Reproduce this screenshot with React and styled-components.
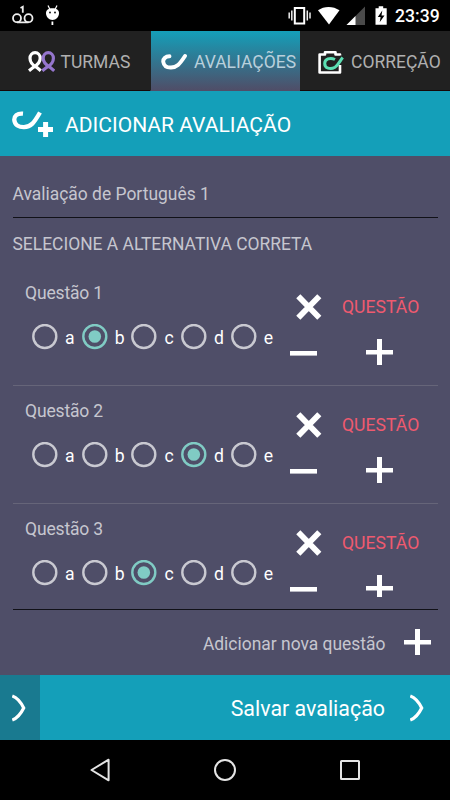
import React from "react";
import styled, { createGlobalStyle } from "styled-components";

const GlobalStyle = createGlobalStyle`
  * {
    box-sizing: border-box;
  }
  body {
    margin: 0;
    background: #000;
    font-family: Roboto, "Liberation Sans", sans-serif;
  }
  svg {
    display: block;
    flex: none;
  }
`;

const Screen = styled.div`
  width: 450px;
  height: 800px;
  display: flex;
  flex-direction: column;
  overflow: hidden;
  background: #4f4e68;
`;

const StatusBar = styled.header`
  height: 31px;
  flex: none;
  background: #000;
  display: flex;
  justify-content: space-between;
`;

const Clock = styled.span`
  color: #fff;
  font-size: 17.6px;
  font-weight: 500;
  line-height: 33px;
  width: 55px;
  white-space: nowrap;
`;

const StatusRight = styled.div`
  display: flex;
`;

const Tabs = styled.nav`
  height: 60px;
  flex: none;
  display: grid;
  grid-template-columns: 150px 150px 150px;
  background: #212121;
`;

const Tab = styled.div`
  display: flex;
  align-items: center;
  gap: ${(p) => p.$gap}px;
  padding-left: ${(p) => p.$left}px;
  padding-top: 2px;
  white-space: nowrap;
  font-size: 17.5px;
  color: ${(p) => (p.$active ? "#b9d0dc" : "#b0b0b0")};
  border-left: ${(p) => (p.$active ? "1px solid #212121" : "0")};
  border-bottom: 1px solid ${(p) => (p.$active ? "#4f4e68" : "#170707")};
  background: ${(p) =>
    p.$active
      ? "linear-gradient(#149fb9, #4f4e68) padding-box"
      : "#212121"};
`;

const TitleBar = styled.div`
  height: 65px;
  flex: none;
  display: flex;
  align-items: center;
  gap: 12px;
  padding: 1px 0 0 12px;
  background: #149fb9;
  color: #fff;
  h1 {
    margin: 0;
    font-size: 21.05px;
    font-weight: 400;
    white-space: nowrap;
  }
`;

const Content = styled.main`
  flex: 1;
  display: flex;
  flex-direction: column;
  padding: 0 12.5px;
  min-height: 0;
`;

const NameField = styled.div`
  height: 62px;
  flex: none;
  padding-top: 28px;
  border-bottom: 1px solid #111118;
  color: #c6c6cf;
  font-size: 17.45px;
  line-height: 21px;
`;

const Subtitle = styled.h2`
  height: 50px;
  flex: none;
  margin: 0;
  padding-top: 15px;
  color: #c6c6cf;
  font-size: 17.45px;
  font-weight: 400;
  line-height: 22px;
  white-space: nowrap;
`;

const List = styled.div`
  height: 329px;
  flex: none;
  overflow: hidden;
`;

const Row = styled.section`
  height: 118.2px;
  display: flex;
  padding: 0 0 0 12.5px;
  border-bottom: 1px solid #666579;
`;

const Answers = styled.div`
  width: 264.5px;
  flex: none;
`;

const Question = styled.div`
  padding-top: 15px;
  height: 55px;
  color: #c6c6cf;
  font-size: 17.5px;
  letter-spacing: -0.15px;
  line-height: 21px;
`;

const Options = styled.div`
  display: flex;
  padding-left: 7px;
`;

const Option = styled.div`
  width: 49.7px;
  display: flex;
  align-items: center;
  color: #fff;
  font-size: 17.6px;
  line-height: 26px;
  span {
    padding: 2px 0 0 7px;
  }
`;

const Actions = styled.div`
  display: grid;
  grid-template-columns: 52.5px 77px;
  grid-template-rows: 26px 27px;
  row-gap: 19px;
  padding-top: 26px;
  height: 100%;
`;

const RemoveLabel = styled.span`
  color: #ef5a6f;
  font-size: 17.6px;
  line-height: 27px;
`;

const RemoveIcon = styled.div`
  padding-left: 6px;
`;

const MinusIcon = styled.div`
  padding-top: 11.500px;
`;

const PlusIcon = styled.div`
  padding-left: 24px;
`;

const AddRow = styled.div`
  flex: 1;
  margin-top: 12px;
  border-top: 1px solid #111118;
  display: flex;
  align-items: center;
  justify-content: flex-end;
  gap: 18.5px;
  padding: 0 6.5px 0 0;
  color: #c6c6cf;
  font-size: 17.45px;
  span {
    padding-top: 2px;
  }
`;

const SaveBar = styled.footer`
  height: 65px;
  flex: none;
  display: flex;
  background: #149fb9;
`;

const Back = styled.div`
  width: 40px;
  display: flex;
  align-items: center;
  padding-left: 12px;
  background: #197a90;
`;

const Save = styled.div`
  flex: 1;
  display: flex;
  align-items: center;
  justify-content: flex-end;
  gap: 25px;
  padding-right: 25px;
  color: #fff;
  font-size: 21.4px;
  span {
    padding-top: 1px;
  }
`;

const NavBar = styled.div`
  height: 60px;
  flex: none;
  background: #000;
  display: flex;
  align-items: center;
  justify-content: space-between;
  padding: 0 90px 0 89px;
`;

const Radio = ({ checked }) => (
  <svg width="26" height="26" viewBox="0 0 26 26">
    <circle
      cx="12.8"
      cy="12.5"
      r="11.5"
      fill="none"
      stroke={checked ? "#80cbc4" : "#c9c9d1"}
      strokeWidth="2.4"
    />
    {checked && <circle cx="12.8" cy="12.5" r="6.3" fill="#80cbc4" />}
  </svg>
);

const Cross = () => (
  <svg width="26" height="26" viewBox="0 0 26 26" stroke="#fff" strokeWidth="5.8">
    <path d="M2.3 2.3 23.3 23.7M23.3 2.3 2.3 23.7" />
  </svg>
);

const Minus = () => (
  <svg width="27" height="5" viewBox="0 0 27 5">
    <path d="M0 0h27v4.6H0z" fill="#fff" />
  </svg>
);

const Plus = () => (
  <svg width="27" height="27" viewBox="0 0 27 27">
    <path d="M11 0h5v11h11v4.6H16V26h-5V15.6H0V11h11z" fill="#fff" />
  </svg>
);

const Chevron = () => (
  <svg width="15" height="28" viewBox="0 0 15 28" fill="none" stroke="#fff" strokeWidth="3.2">
    <path d="M.3 2C5.5 3.8 9 8.5 11.7 14 9 19.5 5.5 24.2.3 26" />
  </svg>
);

const GroupIcon = () => (
  <svg width="27" height="21" viewBox="0 0 27 21" fill="none" strokeWidth="3.2">
    <path
      d="M12.8 19.8 9 16.5C6 15 2 12.500 2 7.300a5.100 5.600 0 0 1 10.200 0C12.200 12.500 8 15 5 16.500L1 19.800"
      stroke="#fff"
    />
    <path
      d="M26.200 19.800 22.400 16.500C19.400 15 15.200 12.500 15.200 7.300a5.100 5.600 0 0 1 10.200 0C25.400 12.500 21.400 15 18.400 16.500l-4.100 3.300"
      stroke="#9575cd"
    />
  </svg>
);

const SwooshIcon = () => (
  <svg width="27" height="18" viewBox="0 0 27 18" fill="none" stroke="#fff" strokeWidth="3.9">
    <path d="M8.500 3.200C4.500 3.200 1.800 6 2.300 9c.6 3.900 3.900 5.600 7.700 5.500C15.500 14.400 18.500 11.500 24 3" strokeLinecap="round" />
  </svg>
);

const SwooshPlusIcon = () => (
  <svg width="41" height="28" viewBox="0 0 41 28" fill="none" stroke="#fff">
    <path d="M11 3.600C5 3.100 2 6 2.300 10c.4 4.800 4.700 7.300 9.700 7.200C19 17 22 12.800 28 2.500" strokeWidth="4.3" />
    <path d="M33.600 12v15M26 19.400h15" strokeWidth="5" />
  </svg>
);

const CameraIcon = () => (
  <svg width="26" height="24" viewBox="0 0 26 24" fill="none">
    <path
      d="M22 5.500V4.500H17.500V2.300H7V4.500H1.600v18H22V15"
      stroke="#fff"
      strokeWidth="2.6"
      strokeLinejoin="round"
    />
    <path
      d="M17 9.500C12 7 6.700 9.200 6.700 13.500c0 4.700 5.500 6.500 10.300 3.700 3.500-2.200 4.800-6.200 7.700-9.700"
      stroke="#5cdfb3"
      strokeWidth="3"
    />
  </svg>
);

const NotificationIcons = () => (
  <svg width="75" height="31" viewBox="0 0 75 31">
    <g fill="none" stroke="#eee" strokeWidth="1.8">
      <circle cx="17" cy="18.2" r="4" />
      <circle cx="28.5" cy="18.2" r="4" />
      <path d="M17 22.300h11.500M20.500 8l2.300-1.200v6" />
    </g>
    <g fill="#fff">
      <path d="M46 13c0-3 2.500-4.700 6.500-4.700S59 10 59 13c0 4-3 7-6.500 7S46 17 46 13z" />
      <path d="M51.500 21.500h1.800V25h-1.800z" />
      <path d="m48 5.500 2 4M57 5.500l-2 4" stroke="#fff" strokeWidth="1.2" />
    </g>
    <circle cx="50" cy="12.5" r=".9" />
    <circle cx="55" cy="12.5" r=".9" />
  </svg>
);

const SystemIcons = () => (
  <svg width="110" height="31" viewBox="0 0 110 31">
    <g transform="translate(-5)">
      <path d="M9.200 12.500v6M11.800 10.500v10M27.300 10.500v10M30 12.500v6" stroke="#eee" strokeWidth="1.5" />
      <rect x="14.8" y="8" width="9.4" height="15.5" stroke="#fff" strokeWidth="2" />
      <path d="M38 10.300c6-4.500 15-4.500 21.500 0L49 24.500z" fill="#fff" />
      <path d="M66.500 25 85 6.500V25z" fill="#4a4a4a" />
      <path d="M66.500 25 75.500 16v9z" fill="#fff" />
      <path d="M95.500 8.300h3.200V6.200h4.500v2.100h3.500v16.500H95.500z" fill="#fff" />
      <path d="m102.300 10.500-4.500 6.500h2.800l-.9 5.300 4.800-6.800h-3z" />
    </g>
  </svg>
);

const NavIcons = {
  Back: () => (
    <svg width="21" height="24" viewBox="0 0 21 24" fill="none" stroke="#e4e4e4" strokeWidth="2">
      <path d="M2.500 12 19.600 1.700v20.600z" strokeLinejoin="round" />
    </svg>
  ),
  Home: () => (
    <svg width="24" height="24" viewBox="0 0 24 24" fill="none" stroke="#e4e4e4" strokeWidth="2">
      <circle cx="12" cy="12" r="10" />
    </svg>
  ),
  Recent: () => (
    <svg width="20" height="20" viewBox="0 0 20 20" fill="none" stroke="#e4e4e4" strokeWidth="2">
      <rect x="1" y="1" width="18" height="18" rx=".5" />
    </svg>
  ),
};

const letters = ["a", "b", "c", "d", "e"];

const questions = [
  { title: "Questão 1", answer: "b" },
  { title: "Questão 2", answer: "d" },
  { title: "Questão 3", answer: "c" },
];

function QuestionRow({ title, answer }) {
  return (
    <Row>
      <Answers>
        <Question>{title}</Question>
        <Options>
          {letters.map((letter) => (
            <Option key={letter}>
              <Radio checked={letter === answer} />
              <span>{letter}</span>
            </Option>
          ))}
        </Options>
      </Answers>
      <Actions>
        <RemoveIcon>
          <Cross />
        </RemoveIcon>
        <RemoveLabel>QUESTÃO</RemoveLabel>
        <MinusIcon>
          <Minus />
        </MinusIcon>
        <PlusIcon>
          <Plus />
        </PlusIcon>
      </Actions>
    </Row>
  );
}

export default function App() {
  return (
    <>
      <GlobalStyle />
      <Screen>
        <StatusBar>
          <NotificationIcons />
          <StatusRight>
            <SystemIcons />
            <Clock>23:39</Clock>
          </StatusRight>
        </StatusBar>
        <Tabs>
          <Tab $left={28} $gap={5.5}>
            <GroupIcon />
            TURMAS
          </Tab>
          <Tab $active $left={10} $gap={6}>
            <SwooshIcon />
            AVALIAÇÕES
          </Tab>
          <Tab $left={17.5} $gap={7.5}>
            <CameraIcon />
            CORREÇÃO
          </Tab>
        </Tabs>
        <TitleBar>
          <SwooshPlusIcon />
          <h1>ADICIONAR AVALIAÇÃO</h1>
        </TitleBar>
        <Content>
          <NameField>Avaliação de Português 1</NameField>
          <Subtitle>SELECIONE A ALTERNATIVA CORRETA</Subtitle>
          <List>
            {questions.map((q) => (
              <QuestionRow key={q.title} {...q} />
            ))}
          </List>
          <AddRow>
            <span>Adicionar nova questão</span>
            <Plus />
          </AddRow>
        </Content>
        <SaveBar>
          <Back>
            <Chevron />
          </Back>
          <Save>
            <span>Salvar avaliação</span>
            <Chevron />
          </Save>
        </SaveBar>
        <NavBar>
          <NavIcons.Back />
          <NavIcons.Home />
          <NavIcons.Recent />
        </NavBar>
      </Screen>
    </>
  );
}
